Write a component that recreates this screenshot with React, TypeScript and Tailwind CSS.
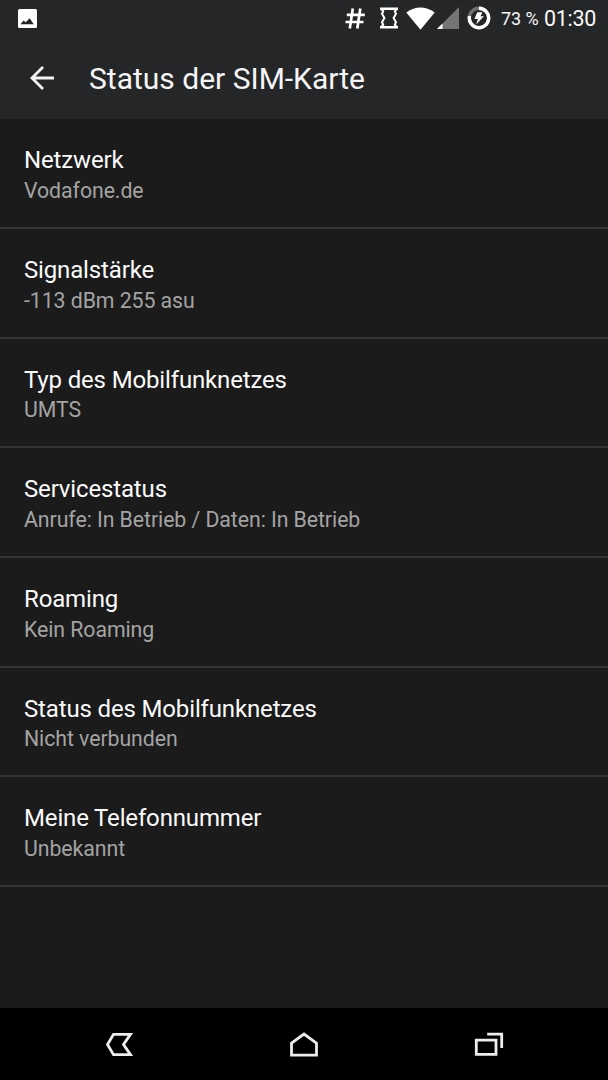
import type { ReactNode } from "react";

interface StatusEntry {
  title: string;
  summary: string;
}

const ENTRIES: StatusEntry[] = [
  { title: "Netzwerk", summary: "Vodafone.de" },
  { title: "Signalstärke", summary: "-113 dBm 255 asu" },
  { title: "Typ des Mobilfunknetzes", summary: "UMTS" },
  { title: "Servicestatus", summary: "Anrufe: In Betrieb / Daten: In Betrieb" },
  { title: "Roaming", summary: "Kein Roaming" },
  { title: "Status des Mobilfunknetzes", summary: "Nicht verbunden" },
  { title: "Meine Telefonnummer", summary: "Unbekannt" },
];

function StatusBar() {
  return (
    <div className="flex h-9 items-center justify-between pl-[18px] pr-3 text-[#f8f8f8]">
      <svg className="h-[19px] w-[19px]" viewBox="0 0 19 19">
        <rect width="19" height="19" rx="1.5" fill="#fff" />
        <path d="M2.5 15.2 5.5 11.4 7.8 13.2 11.6 9.3 15.8 15.2Z" fill="#252628" />
      </svg>

      <div className="flex h-full items-center">
        <svg className="mr-[15px] h-[21px] w-5" viewBox="0 0 20 21" fill="none" stroke="#fff" strokeWidth="2.7">
          <path d="M7.8 .5 4.8 20.5M15.3 .5 12.3 20.5M1.8 6.9H19.8M.5 14H18.5" />
        </svg>
        {/* Sync / reception indicator */}
        <svg className="mr-2 h-[22px] w-[18px]" viewBox="0 0 18 22" fill="none" stroke="#fff" strokeWidth="2">
          <path d="M0 1.7H18M0 20.3H18" strokeWidth="2.6" />
          <path d="M1.2 2 3.2 4.4 2 6.8 4.4 11 2 15.2 3.2 17.6 1.2 20M16.8 2 14.8 4.4 16 6.8 13.6 11 16 15.2 14.8 17.6 16.8 20" />
        </svg>
        <svg className="mr-0.5 h-[23px] w-[29px]" viewBox="0 0 29 23">
          <path d="M.3 5.5Q14.5-4.6 28.7 5.5L14.5 22.8Z" fill="#fff" />
        </svg>
        <svg className="mr-2 h-[22px] w-[22px]" viewBox="0 0 22 22">
          <path d="M0 22 22 0V22Z" fill="#747577" />
          <path d="M0 22 5.5 16.5V22Z" fill="#fff" />
        </svg>
        <svg className="h-6 w-6" viewBox="0 0 24 24" fill="none">
          <circle cx="12" cy="12" r="9.7" stroke="#707173" strokeWidth="3.4" />
          <path d="M12 2.3A9.7 9.7 0 1 1 2.5 10" stroke="#fff" strokeWidth="3.4" />
          <path d="M10.3 6.2H15.4L13.5 10.3H16.9L9.2 18.5 10.9 12.9H7.4Z" fill="#fff" />
        </svg>
        <span className="ml-[10px] w-[43px] whitespace-nowrap pt-px text-[18px] leading-9 tracking-[-0.1px]">73 %</span>
        <span className="w-[52px] whitespace-nowrap pt-px text-[21.5px] leading-9 tracking-[-0.3px]">01:30</span>
      </div>
    </div>
  );
}

function Header() {
  return (
    <header className="flex h-[83px] items-center pl-[30px]">
      <svg className="h-6 w-6" viewBox="0 0 24 24" fill="none" stroke="#f5f5f5" strokeWidth="2.8">
        <path d="M13 1 2 12 13 23M2 12H24" />
      </svg>
      <h1 className="ml-[35px] pt-0.5 text-[30px] leading-9 text-[#f5f5f5]">Status der SIM-Karte</h1>
    </header>
  );
}

function EntryRow({ title, summary }: StatusEntry) {
  return (
    <li className="h-[109.67px] border-b-2 border-[#343434] pl-6 pt-[25px]">
      <p className="text-[24px] leading-8 tracking-[-0.15px] text-[#fafafa]">{title}</p>
      <p className="pt-[0.6px] text-[21.3px] leading-7 tracking-[-0.07px] text-[#a3a3a3]">{summary}</p>
    </li>
  );
}

function NavButton({ label, children }: { label: string; children: ReactNode }) {
  return (
    <button aria-label={label} className="flex h-full w-[184.5px] items-center justify-center">
      <svg className="h-[30px] w-[30px]" viewBox="0 0 30 30" fill="none" stroke="#ededed" strokeWidth="2.8">
        {children}
      </svg>
    </button>
  );
}

export default function App() {
  return (
    <div className="flex h-[1080px] w-[608px] flex-col overflow-hidden bg-[#1b1b1b] font-['Roboto',sans-serif]">
      <div className="bg-[#252628]">
        <StatusBar />
        <Header />
      </div>

      <ul className="flex-1 pt-[0.3px]">
        {ENTRIES.map((entry) => (
          <EntryRow key={entry.title} {...entry} />
        ))}
      </ul>

      {/* System navigation */}
      <nav className="flex h-[72px] shrink-0 justify-center bg-black pt-px">
        <NavButton label="Zurück">
          <path d="M8.5 4.4H25.5L18.5 14.5 25.5 24.6H8.5L2.5 14.5Z" />
        </NavButton>
        <NavButton label="Startbildschirm">
          <path d="M2.5 13.2 15 4 27.5 13.2V25.1H2.5Z" />
        </NavButton>
        <NavButton label="Letzte Apps">
          <path d="M2.3 10.2H22V24.3H2.3ZM13.2 4.2H27.7V18" />
        </NavButton>
      </nav>
    </div>
  );
}
